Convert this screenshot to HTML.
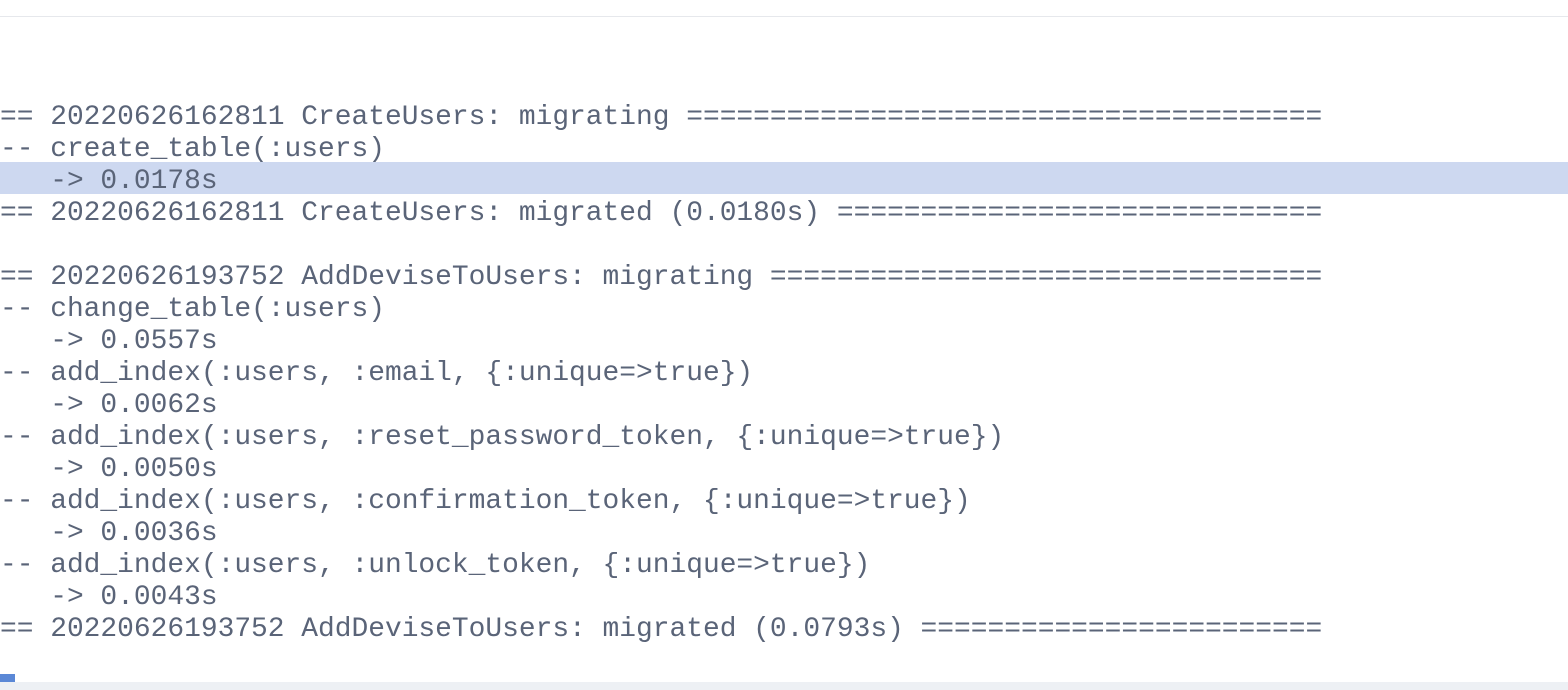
<!DOCTYPE html>
<html><head><meta charset="utf-8"><style>
html,body{margin:0;padding:0;width:1568px;height:690px;overflow:hidden;background:#fff;position:relative}
.top{position:absolute;left:0;top:16px;width:1568px;height:1px;background:#e6e8ec}
pre{position:absolute;left:0;top:102px;margin:0;font-family:"Liberation Mono",monospace;font-size:27.9px;line-height:32px;color:#5a6478;white-space:pre}
.hl{position:absolute;left:0;top:162px;width:1568px;height:32px;background:#cdd8f0}
.bot{position:absolute;left:0;top:682px;width:1568px;height:8px;background:#edf0f4}
.blue{position:absolute;left:0;top:674px;width:15px;height:8px;background:#5b88d6}
</style></head><body>
<div class="top"></div>
<div class="hl"></div>
<pre>== 20220626162811 CreateUsers: migrating ======================================
-- create_table(:users)
   -&gt; 0.0178s
== 20220626162811 CreateUsers: migrated (0.0180s) =============================

== 20220626193752 AddDeviseToUsers: migrating =================================
-- change_table(:users)
   -&gt; 0.0557s
-- add_index(:users, :email, {:unique=&gt;true})
   -&gt; 0.0062s
-- add_index(:users, :reset_password_token, {:unique=&gt;true})
   -&gt; 0.0050s
-- add_index(:users, :confirmation_token, {:unique=&gt;true})
   -&gt; 0.0036s
-- add_index(:users, :unlock_token, {:unique=&gt;true})
   -&gt; 0.0043s
== 20220626193752 AddDeviseToUsers: migrated (0.0793s) ========================</pre>
<div class="bot"></div>
<div class="blue"></div>
</body></html>
